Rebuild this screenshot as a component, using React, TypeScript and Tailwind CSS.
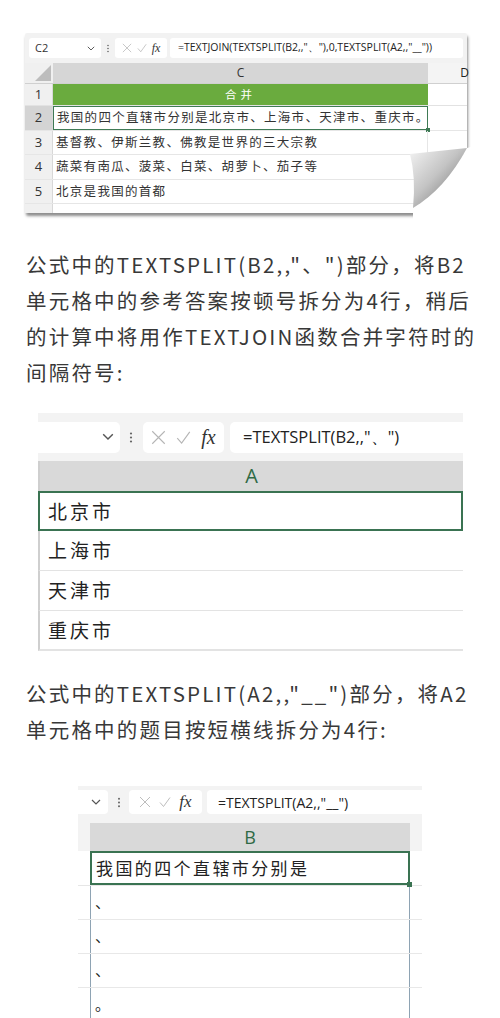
const ui = "font-['Open_Sans','Liberation_Sans',sans-serif]";
const cjk = "font-['Noto_Sans_CJK_SC',sans-serif]";

function Chevron({ size = 10 }: { size?: number }) {
  return (
    <svg width={size} height={size * 0.6} viewBox="0 0 10 6" fill="none">
      <polyline points="1,1 5,5 9,1" stroke="#555" strokeWidth="1.2" />
    </svg>
  );
}

function Dots({ h = 12 }: { h?: number }) {
  return (
    <svg width={4} height={h} viewBox="0 0 4 12">
      <circle cx="2" cy="2" r="1.1" fill="#666" />
      <circle cx="2" cy="6" r="1.1" fill="#666" />
      <circle cx="2" cy="10" r="1.1" fill="#666" />
    </svg>
  );
}

function FxIcons({ size, gap, fx }: { size: number; gap: string; fx: string }) {
  return (
    <div className={`flex items-center ${gap}`}>
      <svg width={size} height={size} viewBox="0 0 12 12" fill="none">
        <path d="M1 1 L11 11 M11 1 L1 11" stroke="#b5b5b5" strokeWidth="0.9" />
      </svg>
      <svg width={size} height={size} viewBox="0 0 12 12" fill="none">
        <path d="M1 6.5 L4.5 10.5 L11 1.5" stroke="#b5b5b5" strokeWidth="0.9" />
      </svg>
      <span className={`font-['Liberation_Serif',serif] italic text-[#333] ${fx}`}>fx</span>
    </div>
  );
}

const topRows = [
  "我国的四个直辖市分别是北京市、上海市、天津市、重庆市。",
  "基督教、伊斯兰教、佛教是世界的三大宗教",
  "蔬菜有南瓜、菠菜、白菜、胡萝卜、茄子等",
  "北京是我国的首都",
];

function TopSheet() {
  return (
    <div className="relative ml-[25px] mt-[33px] w-[442px] rounded-[2px] bg-[#f2f2f2] pt-[3px] shadow-[1px_3px_3px_rgba(0,0,0,0.45)]">
      <div className="flex h-[24px] items-center px-[4px]">
        <div className={`flex h-[20px] w-[72px] items-center justify-between rounded-[3px] bg-white px-[6px] text-[11px] text-[#333] ${ui}`}>
          <span>C2</span>
          <Chevron size={8} />
        </div>
        <div className="mx-[5px]">
          <Dots h={9} />
        </div>
        <div className="flex h-[20px] w-[52px] items-center justify-center rounded-[3px] bg-white">
          <FxIcons size={10} gap="gap-[5px]" fx="text-[12px]" />
        </div>
        <div className={`ml-[3px] flex h-[20px] flex-1 items-center rounded-[3px] bg-white pl-[8px] text-[10.5px] text-[#222] ${ui}`}>
          =TEXTJOIN(TEXTSPLIT(B2,,"、"),0,TEXTSPLIT(A2,,"__"))
        </div>
      </div>
      <div className="mt-[3px] bg-white">
        <div className="flex h-[21px] border-b border-[#d0d0d0]">
          <div className="relative w-[28px] bg-[#f0f0f0]">
            <svg className="absolute bottom-[2px] right-[2px]" width="16" height="16" viewBox="0 0 16 16">
              <polygon points="16,0 16,16 0,16" fill="#bdbdbd" />
            </svg>
          </div>
          <div className={`flex w-[375px] items-center justify-center bg-[#d6d6d6] text-[12px] text-[#333] ${ui}`}>C</div>
          <div className={`flex flex-1 items-center justify-end bg-[#f4f4f4] text-[12px] text-[#222] ${ui}`}>
            <span className="-mr-[2px]">D</span>
          </div>
        </div>
        <div className="flex h-[22px] border-b border-[#e2e2e2]">
          <div className={`flex w-[28px] items-center justify-center border-r border-[#d8d8d8] bg-[#f0f0f0] text-[13px] text-[#333] ${ui}`}>1</div>
          <div className={`flex w-[375px] items-center justify-center bg-[#6aab3e] text-[11.5px] tracking-[4px] text-white ${cjk}`}>合并</div>
          <div className="flex-1" />
        </div>
        {topRows.map((t, i) => (
          <div key={t} className="flex h-[24.5px] border-b border-[#e6e6e6]">
            <div
              className={`flex w-[28px] items-center justify-center border-r border-[#d8d8d8] text-[13px] text-[#333] ${ui} ${
                i === 0 ? "bg-[#d4d4d4]" : "bg-[#f0f0f0]"
              }`}
            >
              {i + 2}
            </div>
            <div
              className={`relative flex w-[375px] items-center whitespace-nowrap pl-[3px] text-[12.5px] tracking-[1.3px] text-[#333] ${cjk} ${
                i === 0 ? "border-[1.5px] border-[#3f7a55]" : "border-r border-[#e6e6e6]"
              }`}
            >
              {t}
              {i === 0 && <span className="absolute -bottom-[3px] -right-[3px] h-[4px] w-[4px] bg-[#3f7a55]" />}
            </div>
            <div className="flex-1" />
          </div>
        ))}
        <div className="flex h-[9px]">
          <div className="w-[28px] border-r border-[#d8d8d8] bg-[#f0f0f0]" />
        </div>
      </div>
      <svg className="pointer-events-none absolute -bottom-[6px] -right-[4px]" width="64" height="72" viewBox="0 0 64 72">
        <defs>
          <linearGradient id="curl" x1="0" y1="0" x2="1" y2="1">
            <stop offset="0" stopColor="#f4f4f4" />
            <stop offset="0.45" stopColor="#c4c4c4" />
            <stop offset="0.75" stopColor="#8e8e8e" />
            <stop offset="1" stopColor="#cfcfcf" />
          </linearGradient>
        </defs>
        <path d="M60 1 Q38 42 6 61 L6 72 L64 72 L64 0 Z" fill="#ffffff" />
        <path d="M3 7 L60 1 Q38 42 6 61 Q9 30 3 7 Z" fill="url(#curl)" />
      </svg>
    </div>
  );
}

function MiddleSheet() {
  const rows = ["北京市", "上海市", "天津市", "重庆市"];
  return (
    <div className="mt-[23px] ml-[38px] w-[425px] overflow-hidden bg-[#f3f3f3]">
      <div className="flex h-[48px] items-center">
        <div className="flex h-[31px] w-[82px] items-center justify-end rounded-r-[5px] bg-white pr-[6px]">
          <Chevron size={12} />
        </div>
        <div className="ml-[9px] mr-[10px]">
          <Dots h={13} />
        </div>
        <div className="flex h-[31px] w-[81px] items-center justify-center rounded-[5px] bg-white">
          <FxIcons size={15} gap="gap-[10px]" fx="text-[20px]" />
        </div>
        <div className={`ml-[6px] flex h-[31px] flex-1 items-center rounded-l-[5px] bg-white pl-[13px] text-[16.5px] text-[#222] ${ui}`}>
          =TEXTSPLIT(B2,,"、")
        </div>
      </div>
      <div className="bg-white">
        <div className={`flex h-[30px] items-center justify-center border-l-[2px] border-[#cfcfcf] bg-[#d9d9d9] text-[20px] text-[#2f6a45] ${ui}`}>
          A
        </div>
        {rows.map((r, i) => (
          <div
            key={r}
            className={`flex h-[40px] items-center whitespace-nowrap pl-[8px] text-[19px] tracking-[3px] text-[#222] ${cjk} ${
              i === 0 ? "border-[2px] border-[#3a7352]" : "border-b border-l-[2px] border-b-[#e3e3e3] border-l-[#cfcfcf]"
            } ${i === rows.length - 1 ? "border-b-[2px] border-b-[#a9b8c8]" : ""}`}
          >
            {r}
          </div>
        ))}
      </div>
    </div>
  );
}

function BottomSheet() {
  const rows = ["、", "、", "、", "。"];
  return (
    <div className="ml-[78px] mt-[39px] w-[344px] bg-[#f3f3f3]">
      <div className="flex h-[32px] items-center">
        <div className="flex h-[24px] w-[30px] items-center justify-end rounded-r-[4px] bg-white pr-[7px]">
          <Chevron size={10} />
        </div>
        <div className="ml-[9px] mr-[8px]">
          <Dots h={11} />
        </div>
        <div className="flex h-[24px] w-[73px] items-center justify-center rounded-[4px] bg-white">
          <FxIcons size={12} gap="gap-[8px]" fx="text-[17px]" />
        </div>
        <div className={`ml-[5px] flex h-[24px] flex-1 items-center rounded-l-[4px] bg-white pl-[11px] text-[14px] text-[#222] ${ui}`}>
          =TEXTSPLIT(A2,,"__")
        </div>
      </div>
      <div className="flex h-[5px]" />
      <div className="bg-white">
        <div className="flex h-[28px] bg-[#f3f3f3]">
          <div className="w-[12px]" />
          <div className={`flex w-[320px] items-center justify-center bg-[#d9d9d9] text-[18px] text-[#2f6a45] ${ui}`}>B</div>
        </div>
        <div className="flex h-[35px] border-b border-[#e6e6e6]">
          <div className="w-[12px]" />
          <div className={`relative flex w-[320px] items-center whitespace-nowrap border-[2px] border-[#3a7352] pl-[4px] text-[17px] tracking-[2.4px] text-[#222] ${cjk}`}>
            我国的四个直辖市分别是
            <span className="absolute -bottom-[4px] -right-[4px] h-[5px] w-[5px] bg-[#3a7352]" />
          </div>
        </div>
        {rows.map((r, i) => (
          <div key={i} className="flex h-[34px] border-b border-[#e8e8e8]">
            <div className="w-[12px]" />
            <div className={`flex w-[320px] items-center border-x-[1.5px] border-[#8ea3b3] pl-[4px] text-[15px] text-[#222] ${cjk}`}>
              {r}
            </div>
          </div>
        ))}
      </div>
    </div>
  );
}

function Para({ lines, className = "" }: { lines: string[]; className?: string }) {
  return (
    <div className={`ml-[26px] text-[20.5px] leading-[36px] tracking-[2.2px] text-[#383838] ${cjk} ${className}`}>
      {lines.map((l) => (
        <div key={l} className="whitespace-nowrap">
          {l}
        </div>
      ))}
    </div>
  );
}

export default function App() {
  return (
    <main className="h-[1018px] w-[500px] overflow-hidden bg-white">
      <TopSheet />
      <Para
        className="mt-[33px]"
        lines={[
          "公式中的TEXTSPLIT(B2,,\"、\")部分，将B2",
          "单元格中的参考答案按顿号拆分为4行，稍后",
          "的计算中将用作TEXTJOIN函数合并字符时的",
          "间隔符号:",
        ]}
      />
      <MiddleSheet />
      <Para
        className="mt-[24px]"
        lines={["公式中的TEXTSPLIT(A2,,\"__\")部分，将A2", "单元格中的题目按短横线拆分为4行:"]}
      />
      <BottomSheet />
    </main>
  );
}
